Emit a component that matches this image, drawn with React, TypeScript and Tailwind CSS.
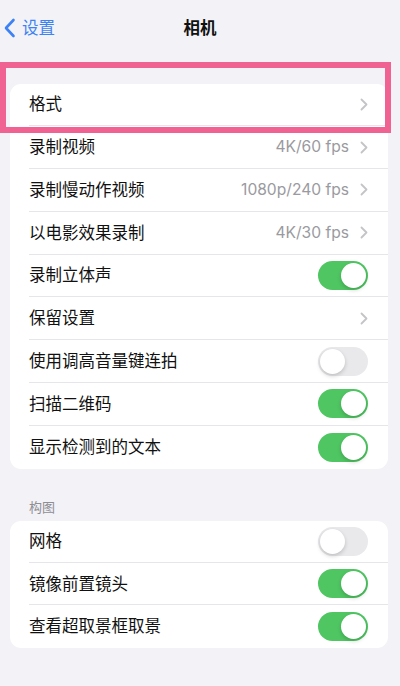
import React from "react";

type Row =
  | { label: string; kind: "chevron"; value?: string }
  | { label: string; kind: "toggle"; on: boolean };

const group1: Row[] = [
  { label: "格式", kind: "chevron" },
  { label: "录制视频", kind: "chevron", value: "4K/60 fps" },
  { label: "录制慢动作视频", kind: "chevron", value: "1080p/240 fps" },
  { label: "以电影效果录制", kind: "chevron", value: "4K/30 fps" },
  { label: "录制立体声", kind: "toggle", on: true },
  { label: "保留设置", kind: "chevron" },
  { label: "使用调高音量键连拍", kind: "toggle", on: false },
  { label: "扫描二维码", kind: "toggle", on: true },
  { label: "显示检测到的文本", kind: "toggle", on: true },
];

const group2: Row[] = [
  { label: "网格", kind: "toggle", on: false },
  { label: "镜像前置镜头", kind: "toggle", on: true },
  { label: "查看超取景框取景", kind: "toggle", on: true },
];

function Chevron() {
  return (
    <svg width="8" height="13" viewBox="0 0 8 13" fill="none">
      <path d="M1.5 1.5L6.5 6.5L1.5 11.5" stroke="#c4c4c8" strokeWidth="1.8" strokeLinecap="round" strokeLinejoin="round" />
    </svg>
  );
}

function Toggle({ on }: { on: boolean }) {
  return (
    <div
      className={
        "relative w-[50px] h-[29px] rounded-full " +
        (on ? "bg-[#4fc662]" : "bg-[#e9e9ec]")
      }
    >
      <div
        className={
          "absolute top-[2px] w-[25px] h-[25px] rounded-full bg-white shadow-[0_2px_4px_rgba(0,0,0,0.18)] " +
          (on ? "right-[2px]" : "left-[2px]")
        }
      />
    </div>
  );
}

function Group({ rows, h }: { rows: Row[]; h: string }) {
  return (
    <div className="ml-[10px] mr-[12px] bg-white rounded-[11px] overflow-hidden">
      {rows.map((r, i) => (
        <div key={r.label} className={"flex pl-[19px] " + h}>
          <div
            className={
              "flex-1 flex items-center justify-between pr-[20px] " +
              (i < rows.length - 1 ? "border-b border-[#e6e6ea]" : "")
            }
          >
            <span className="text-[16.5px] text-[#111] leading-none">{r.label}</span>
            {r.kind === "chevron" ? (
              <div className="flex items-center gap-[11px]">
                {r.value && (
                  <span className="text-[15.6px] text-[#9a9aa0] leading-none" style={{ fontFamily: "Inter, 'Noto Sans', sans-serif" }}>
                    {r.value}
                  </span>
                )}
                <Chevron />
              </div>
            ) : (
              <Toggle on={r.on} />
            )}
          </div>
        </div>
      ))}
    </div>
  );
}

export default function App() {
  return (
    <div
      className="relative w-[400px] h-[686px] bg-[#f2f2f7] overflow-hidden"
      style={{ fontFamily: "Inter, 'Noto Sans CJK SC', sans-serif" }}
    >
      <div className="relative h-[56px] flex items-center">
        <div className="flex items-center pl-[4px] gap-[6px]">
          <svg width="12" height="20" viewBox="0 0 12 20" fill="none">
            <path d="M9.5 2L2 10L9.5 18" stroke="#3d82f5" strokeWidth="2.6" strokeLinecap="round" strokeLinejoin="round" />
          </svg>
          <span className="text-[16.5px] text-[#3d82f5]">设置</span>
        </div>
        <div className="absolute inset-0 flex items-center justify-center pointer-events-none">
          <span className="text-[16.5px] font-bold text-[#111]">相机</span>
        </div>
      </div>
      <div className="pt-[27.5px]">
        <Group rows={group1} h="h-[42.8px]" />
      </div>
      <div className="pt-[29px] pb-[5px] pl-[29px] leading-[18px] text-[13px] text-[#8e8e93]">构图</div>
      <Group rows={group2} h="h-[42.4px]" />

      <div className="absolute left-0 top-[62px] w-[391px] h-[71px] border-[6px] border-[#f06292]" />
    </div>
  );
}
